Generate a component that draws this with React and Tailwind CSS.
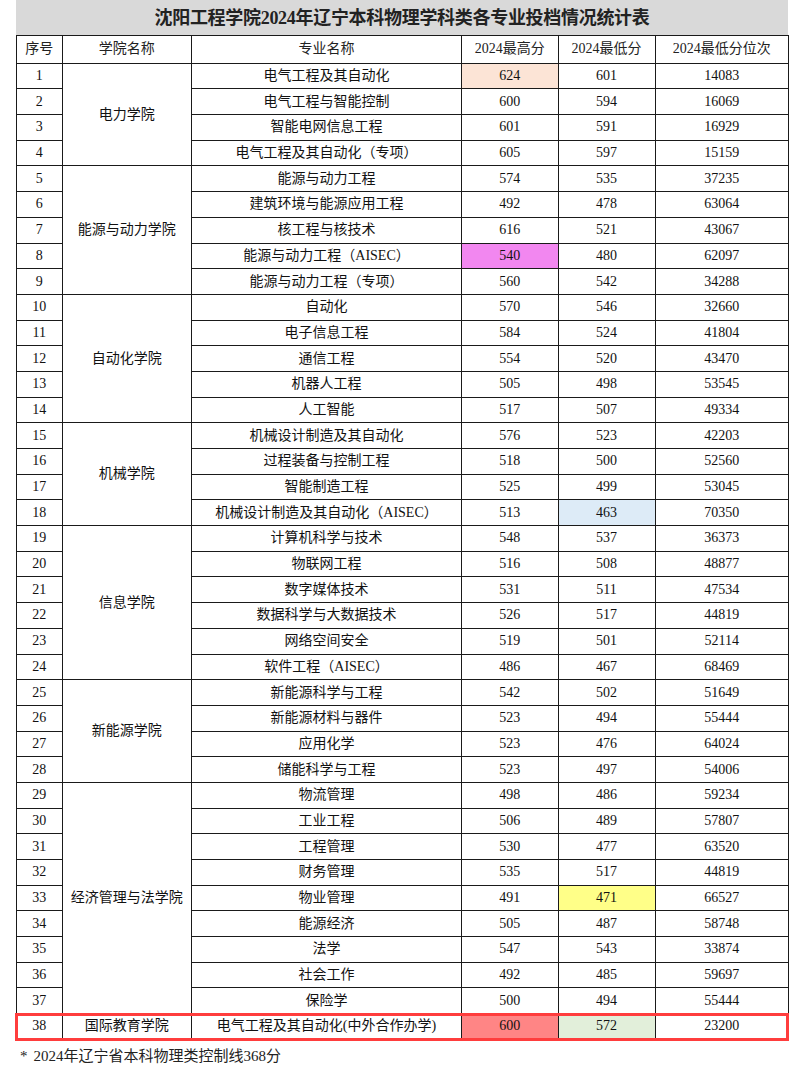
const groups = [
  {
    name: '电力学院',
    rows: [
      [1, '电气工程及其自动化', '624', '601', '14083', 'bg-[#fce4d6]', ''],
      [2, '电气工程与智能控制', '600', '594', '16069'],
      [3, '智能电网信息工程', '601', '591', '16929'],
      [4, '电气工程及其自动化（专项）', '605', '597', '15159'],
    ],
  },
  {
    name: '能源与动力学院',
    rows: [
      [5, '能源与动力工程', '574', '535', '37235'],
      [6, '建筑环境与能源应用工程', '492', '478', '63064'],
      [7, '核工程与核技术', '616', '521', '43067'],
      [8, '能源与动力工程（AISEC）', '540', '480', '62097', 'bg-[#f287f0]', ''],
      [9, '能源与动力工程（专项）', '560', '542', '34288'],
    ],
  },
  {
    name: '自动化学院',
    rows: [
      [10, '自动化', '570', '546', '32660'],
      [11, '电子信息工程', '584', '524', '41804'],
      [12, '通信工程', '554', '520', '43470'],
      [13, '机器人工程', '505', '498', '53545'],
      [14, '人工智能', '517', '507', '49334'],
    ],
  },
  {
    name: '机械学院',
    rows: [
      [15, '机械设计制造及其自动化', '576', '523', '42203'],
      [16, '过程装备与控制工程', '518', '500', '52560'],
      [17, '智能制造工程', '525', '499', '53045'],
      [18, '机械设计制造及其自动化（AISEC）', '513', '463', '70350', '', 'bg-[#ddebf7]'],
    ],
  },
  {
    name: '信息学院',
    rows: [
      [19, '计算机科学与技术', '548', '537', '36373'],
      [20, '物联网工程', '516', '508', '48877'],
      [21, '数字媒体技术', '531', '511', '47534'],
      [22, '数据科学与大数据技术', '526', '517', '44819'],
      [23, '网络空间安全', '519', '501', '52114'],
      [24, '软件工程（AISEC）', '486', '467', '68469'],
    ],
  },
  {
    name: '新能源学院',
    rows: [
      [25, '新能源科学与工程', '542', '502', '51649'],
      [26, '新能源材料与器件', '523', '494', '55444'],
      [27, '应用化学', '523', '476', '64024'],
      [28, '储能科学与工程', '523', '497', '54006'],
    ],
  },
  {
    name: '经济管理与法学院',
    rows: [
      [29, '物流管理', '498', '486', '59234'],
      [30, '工业工程', '506', '489', '57807'],
      [31, '工程管理', '530', '477', '63520'],
      [32, '财务管理', '535', '517', '44819'],
      [33, '物业管理', '491', '471', '66527', '', 'bg-[#ffff88]'],
      [34, '能源经济', '505', '487', '58748'],
      [35, '法学', '547', '543', '33874'],
      [36, '社会工作', '492', '485', '59697'],
      [37, '保险学', '500', '494', '55444'],
    ],
  },
  {
    name: '国际教育学院',
    rows: [
      [38, '电气工程及其自动化(中外合作办学)', '600', '572', '23200', 'bg-[#ff8585]', 'bg-[#e2efda]'],
    ],
  },
]

const cell = 'border border-[#1a1a1a] text-center align-middle p-0 whitespace-nowrap'

export default function App() {
  return (
    <div
      className="w-[804px] h-[1069px] bg-white text-[#111] overflow-hidden"
      style={{ fontFamily: '"Liberation Serif", "Noto Sans CJK SC", serif' }}
    >
      <div className="ml-[16px] w-[772px] h-[35px] bg-[#d9d9d9] flex items-center justify-center pt-[2px]">
        <h1 className="text-[18px] font-bold text-[#222] tracking-[-0.3px]">
          沈阳工程学院2024年辽宁本科物理学科类各专业投档情况统计表
        </h1>
      </div>

      <div className="relative ml-[16px] w-[772px]">
        <table className="w-[772px] border-collapse table-fixed text-[14px] leading-none">
          <colgroup>
            <col className="w-[45.5px]" />
            <col className="w-[129.5px]" />
            <col className="w-[270px]" />
            <col className="w-[96.5px]" />
            <col className="w-[97px]" />
            <col className="w-[133.5px]" />
          </colgroup>
          <thead>
            <tr className="h-[27.7px] text-[#222]">
              <th className={cell + ' font-normal'}>序号</th>
              <th className={cell + ' font-normal'}>学院名称</th>
              <th className={cell + ' font-normal'}>专业名称</th>
              <th className={cell + ' font-normal'}>2024最高分</th>
              <th className={cell + ' font-normal'}>2024最低分</th>
              <th className={cell + ' font-normal'}>2024最低分位次</th>
            </tr>
          </thead>
          <tbody>
            {groups.map(g =>
              g.rows.map(([no, major, hi, lo, rank, hiBg = '', loBg = ''], i) => (
                <tr key={no} className="h-[25.7px]">
                  <td className={cell}>{no}</td>
                  {i === 0 && (
                    <td rowSpan={g.rows.length} className={cell}>{g.name}</td>
                  )}
                  <td className={cell}>{major}</td>
                  <td className={cell + ' ' + hiBg}>{hi}</td>
                  <td className={cell + ' ' + loBg}>{lo}</td>
                  <td className={cell}>{rank}</td>
                </tr>
              ))
            )}
          </tbody>
        </table>
        <div className="absolute left-[-1px] right-[-1px] bottom-[-1px] h-[28px] border-[3px] border-[#ff3d3d] pointer-events-none" />
      </div>

      <p className="mt-[5px] ml-[20px] text-[15px] text-[#222]">
        <span className="mr-[6px]">*</span>2024年辽宁省本科物理类控制线368分
      </p>
    </div>
  )
}
